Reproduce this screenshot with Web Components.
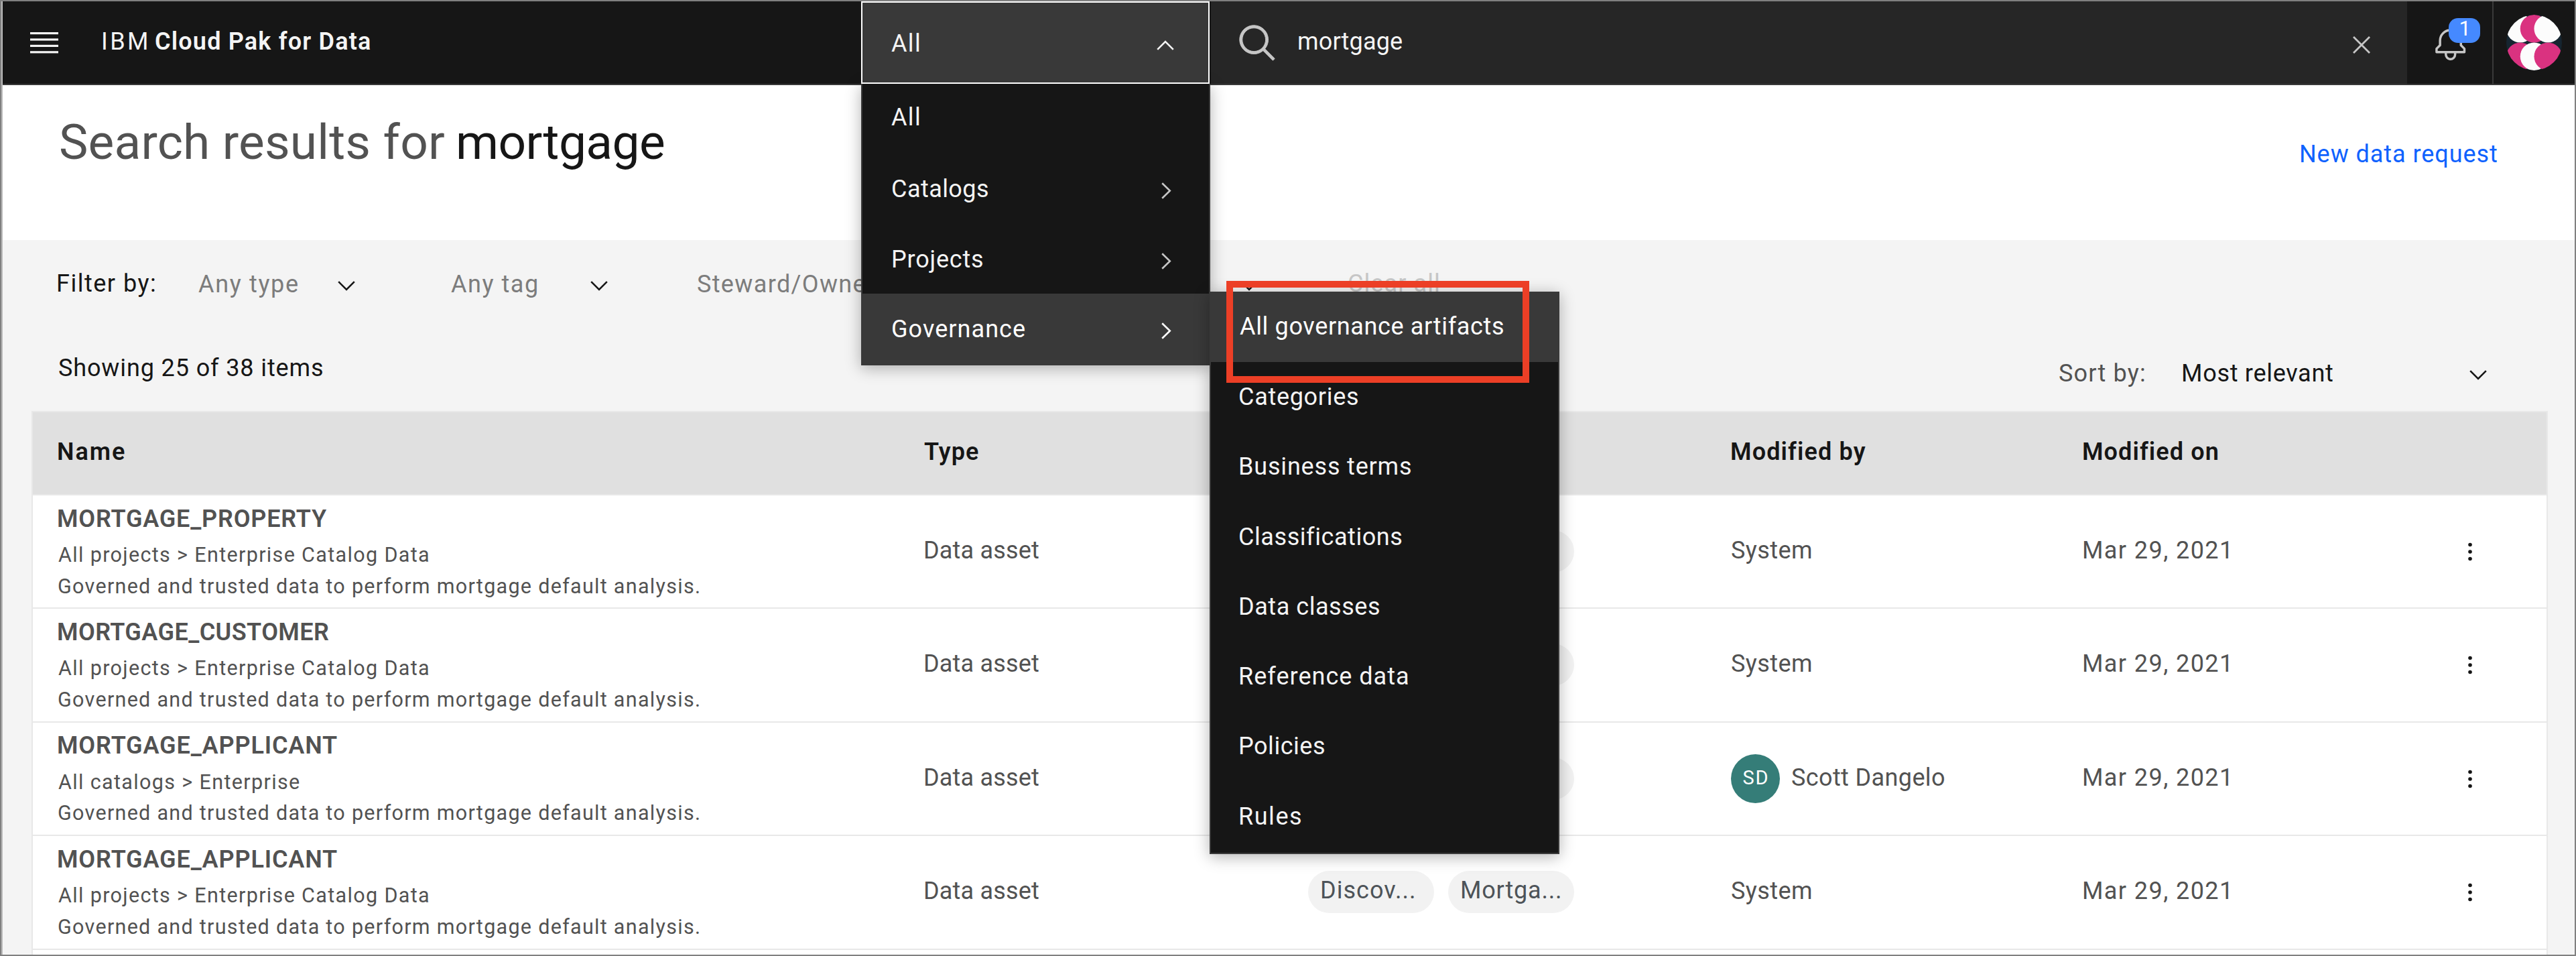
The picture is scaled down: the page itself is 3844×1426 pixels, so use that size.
<!DOCTYPE html>
<html lang="en">
<head>
<meta charset="utf-8">
<title>Search results - IBM Cloud Pak for Data</title>
<style>
html,body{margin:0;padding:0}
body{width:3844px;height:1426px;overflow:hidden;background:#f4f4f4;font-family:Roboto,"Noto Sans",sans-serif;font-size:36px;color:#161616}
</style>
</head>
<body>
<search-page></search-page>
<script>
const define = (name, html, setup) => {
  const tpl = document.createElement('template');
  tpl.innerHTML = html;
  customElements.define(name, class extends HTMLElement {
    connectedCallback() {
      if (this.shadowRoot) return;
      this.attachShadow({ mode: 'open' }).appendChild(tpl.content.cloneNode(true));
      if (setup) setup(this, this.shadowRoot);
    }
  });
};

/* One line of text whose ink spans exactly `w` pixels. */
const ctx = document.createElement('canvas').getContext('2d');
define('ui-text', `<style>
:host{display:block;flex:none;line-height:40px;height:40px;white-space:nowrap}
span{display:block;width:max-content}
</style><span><slot></slot></span>`, (el, root) => {
  const w = +el.getAttribute('w');
  const cs = getComputedStyle(el);
  ctx.font = cs.fontWeight + ' ' + cs.fontSize + ' ' + cs.fontFamily;
  const t = el.textContent;
  const m = ctx.measureText(t);
  const ink = m.actualBoundingBoxLeft + m.actualBoundingBoxRight;
  const span = root.querySelector('span');
  if (t.length > 1) span.style.letterSpacing = ((w - ink) / (t.length - 1)).toFixed(3) + 'px';
  span.style.marginLeft = m.actualBoundingBoxLeft.toFixed(2) + 'px';
  el.style.width = w + 'px';
});

const CHEVRONS = {
  down: ['26', '15', '1.2,1.2 13,13 24.8,1.2'],
  up: ['26', '15', '1.2,13.8 13,2 24.8,13.8'],
  right: ['15', '25', '1.2,1.2 12.8,12.5 1.2,23.8']
};
define('ui-chevron', `<style>:host{display:block;flex:none;line-height:0}svg{display:block;overflow:visible}</style>
<svg fill="none" stroke="currentColor" stroke-width="2.6"><polyline/></svg>`, (el, root) => {
  const [w, h, p] = CHEVRONS[el.getAttribute('dir')];
  const s = root.querySelector('svg');
  s.setAttribute('width', w); s.setAttribute('height', h);
  s.firstElementChild.setAttribute('points', p);
});

define('menu-item', `<style>
:host{display:flex;box-sizing:border-box;height:105px;padding:0 56px 0 var(--indent,45px);align-items:flex-start;justify-content:space-between;color:#f4f4f4}
:host([active]){background:#393939;color:#fff}
ui-chevron{margin-top:43px;color:#c6c6c6}
:host([active]) ui-chevron{color:#fff}
.t{padding-top:var(--drop,33px)}
</style><div class="t"><slot></slot></div>`, (el, root) => {
  if (el.hasAttribute('more')) {
    const c = document.createElement('ui-chevron');
    c.setAttribute('dir', 'right');
    root.appendChild(c);
  }
});

define('scope-menu', `<style>
:host{display:block;background:#161616;box-shadow:0 4px 22px rgba(0,0,0,.3);border:2px solid #393939;border-top:0;box-sizing:border-box}
</style><slot></slot>`);

define('scope-select', `<style>
:host{display:block;position:relative;height:123px}
.field{box-sizing:border-box;display:flex;justify-content:space-between;align-items:flex-start;width:520px;height:123px;padding:41px 51px 0 43px;background:#393939;border:2px solid #fff;color:#f4f4f4;position:relative;z-index:3}
.field ui-chevron{margin-top:15px}
.main{position:absolute;z-index:2;left:0;top:123px;width:521px;height:420px}
.sub{position:absolute;z-index:4;left:520px;top:433px;width:522px;height:839px;--indent:43px;--drop:32px}
.sub menu-item{height:104.3px}
.sub menu-item[active]{height:105px}
.mark{position:absolute;z-index:5;left:545px;top:417px;width:452px;height:152px;box-sizing:border-box;border:10px solid #ec3f26}
</style>
<div class="field"><ui-text w="42">All</ui-text><ui-chevron dir="up"></ui-chevron></div>
<scope-menu class="main">
<menu-item style="height:104px"><ui-text w="42" style="margin:-3px 0 0 -2px">All</ui-text></menu-item>
<menu-item more><ui-text w="142">Catalogs</ui-text></menu-item>
<menu-item more style="height:104px"><ui-text w="134">Projects</ui-text></menu-item>
<menu-item more active><ui-text w="197">Governance</ui-text></menu-item>
</scope-menu>
<scope-menu class="sub">
<menu-item active><ui-text w="393">All governance artifacts</ui-text></menu-item>
<menu-item><ui-text w="176">Categories</ui-text></menu-item>
<menu-item><ui-text w="255">Business terms</ui-text></menu-item>
<menu-item><ui-text w="240">Classifications</ui-text></menu-item>
<menu-item><ui-text w="208">Data classes</ui-text></menu-item>
<menu-item><ui-text w="251">Reference data</ui-text></menu-item>
<menu-item><ui-text w="126">Policies</ui-text></menu-item>
<menu-item><ui-text w="91">Rules</ui-text></menu-item>
</scope-menu>
<div class="mark"></div>`);

define('app-header', `<style>
:host{display:grid;grid-template-columns:1283px 522px 1fr 127px 123px;height:123px;background:#161616;border-bottom:2px solid #393939;color:#f4f4f4}
.brand{display:flex;align-items:flex-start;padding:40px 0 0 43px}
.brand svg{margin:5.5px 67px 0 0}
.search{display:flex;align-items:flex-start;background:#262626;height:123px;color:#f4f4f4}
.glass{margin:32px 30px 0 39px;width:62px;height:62px;fill:#c6c6c6}
.close{margin:52px 55px 0 auto}
.bell{position:relative}
.bell svg{display:block;margin:36px 0 0 37px;fill:#c6c6c6}
.badge{position:absolute;left:62px;top:25px;width:47px;height:37px;border-radius:14px;background:#4589ff;color:#fff;display:flex;justify-content:center;font-size:31px}
.badge ui-text{margin-top:-4px}
.user{border-left:2px solid #393939;padding:20px 0 0 19px}
</style>
<div class="brand">
<svg width="42" height="32" fill="#f4f4f4"><rect width="42" height="3.2"/><rect y="9.4" width="42" height="3.2"/><rect y="18.8" width="42" height="3.2"/><rect y="28.2" width="42" height="3.2"/></svg>
<ui-text w="65">IBM</ui-text><ui-text w="320" style="margin-left:13px;font-weight:600">Cloud Pak for Data</ui-text>
</div>
<scope-select></scope-select>
<div class="search">
<svg class="glass" viewBox="0 0 32 32"><path d="M29,27.5859l-7.5521-7.5521a11.0177,11.0177,0,1,0-1.4141,1.4141L27.5859,29ZM4,13a9,9,0,1,1,9,9A9.01,9.01,0,0,1,4,13Z" stroke="#c6c6c6" stroke-width=".5"/></svg>
<ui-text w="154" style="margin-top:40px">mortgage</ui-text>
<svg class="close" width="26" height="26" stroke="#c6c6c6" stroke-width="2.8"><path d="M1 1 25 25M25 1 1 25"/></svg>
</div>
<div class="bell">
<svg width="55.4" height="55.4" viewBox="0 0 32 32"><path d="M28.7071,19.293,26,16.5859V13a10.0136,10.0136,0,0,0-9-9.9492V1H15V3.0508A10.0136,10.0136,0,0,0,6,13v3.5859L3.2929,19.293A1,1,0,0,0,3,20v3a1,1,0,0,0,1,1h7v.7768a5.152,5.152,0,0,0,4.5,5.1987A5.0057,5.0057,0,0,0,21,25V24h7a1,1,0,0,0,1-1V20A1,1,0,0,0,28.7071,19.293ZM19,25a3,3,0,0,1-6,0V24h6Zm8-3H5V20.4141L7.707,17.707A1,1,0,0,0,8,17V13a8,8,0,0,1,16,0v4a1,1,0,0,0,.293.707L27,20.4141Z"/></svg>
<div class="badge"><ui-text w="12">1</ui-text></div>
</div>
<div class="user">
<svg width="83" height="83" viewBox="540 66 248 248"><defs><clipPath id="c"><circle cx="664" cy="190" r="124"/></clipPath></defs>
<g clip-path="url(#c)"><rect x="540" y="66" width="248" height="248" fill="#162530"/>
<circle cx="602" cy="128" r="62" fill="#fcfcfc"/><circle cx="664" cy="128" r="62" fill="#da3280"/><circle cx="726" cy="128" r="62" fill="#fcfcfc"/>
<circle cx="602" cy="252" r="62" fill="#da3280"/><circle cx="664" cy="252" r="62" fill="#fcfcfc"/><circle cx="726" cy="252" r="62" fill="#da3280"/></g></svg>
</div>`);

define('page-title', `<style>
:host{display:flex;box-sizing:border-box;height:231px;background:#fff;padding:65px 116px 0 88px;align-items:flex-start}
.h{display:flex;gap:21px;font-size:73px;color:#525252}
.k{color:#161616}
.l{margin:18px 0 0 auto;color:#0f62fe}
</style>
<div class="h"><ui-text w="573">Search results for</ui-text><ui-text class="k" w="307">mortgage</ui-text></div>
<ui-text class="l" w="293">New data request</ui-text>`);

define('filter-bar', `<style>
:host{display:block;height:255px}
.row{display:flex;align-items:flex-start;height:40px}
.f{padding:45px 0 0 84px}
.f .m{color:#7c7c7c;margin-top:1px}
.f ui-chevron{margin-top:16px}
.s{padding:86px 131px 0 86px;justify-content:space-between}
.o{display:flex;align-items:flex-start;margin-top:8px}
.o ui-chevron{margin-top:15px}
</style>
<div class="row f"><ui-text w="145">Filter by:</ui-text>
<ui-text class="m" w="148" style="margin-left:65px">Any type</ui-text><ui-chevron dir="down" style="margin-left:60px"></ui-chevron>
<ui-text class="m" w="128" style="margin-left:143px">Any tag</ui-text><ui-chevron dir="down" style="margin-left:80px"></ui-chevron>
<ui-text class="m" w="264" style="margin-left:134px">Steward/Owner</ui-text><ui-chevron dir="down" style="margin-left:546px"></ui-chevron>
<ui-text w="134" style="margin-left:136px;color:#c6c6c6">Clear all</ui-text></div>
<div class="row s"><ui-text w="393">Showing 25 of 38 items</ui-text>
<div class="o"><ui-text w="127" style="color:#525252">Sort by:</ui-text><ui-text w="224" style="margin-left:57px">Most relevant</ui-text><ui-chevron dir="down" style="margin-left:204px"></ui-chevron></div></div>`);

define('tag-chip', `<style>
:host{display:flex;box-sizing:border-box;width:188px;height:63px;border-radius:32px;background:#f2f2f2;color:#4d5358;padding:9px 20px 0}
</style><slot></slot>`);

define('user-badge', `<style>
:host{display:flex;align-items:center;gap:18px;margin-left:-1px}
.a{box-sizing:border-box;width:73px;height:73px;border-radius:50%;background:#357d78;color:#fff;font-size:29px;display:flex;justify-content:center;padding-top:15px}
</style><div class="a"><ui-text w="36">SD</ui-text></div><ui-text w="227" style="margin-top:-3px">Scott Dangelo</ui-text>`);

define('result-row', `<style>
:host{display:grid;grid-template-columns:1293px 572px 632px 525px 574px 1fr;box-sizing:border-box;height:169.4px;padding-left:38px;border-bottom:2px solid #e8e8e8;background:#fff;color:#525252;align-items:start}
.name{padding-top:14.5px}
.sub{font-size:30.5px;margin-top:14.5px}
.desc{margin-top:6.5px}
.c{padding-top:62px}
.tags{display:flex;gap:21px;padding-top:52px}
.by{height:167px;display:flex;align-items:center}
.dots{padding-top:70px}
svg{display:block}
</style>
<div class="name"><slot name="name"></slot><div class="sub"><slot name="path"></slot></div>
<div class="sub desc"><ui-text w="956">Governed and trusted data to perform mortgage default analysis.</ui-text></div></div>
<div class="c"><ui-text w="170">Data asset</ui-text></div>
<div class="tags"><slot name="tags"><tag-chip></tag-chip><tag-chip></tag-chip></slot></div>
<div class="by"><slot name="by"><ui-text w="119" style="margin-bottom:4px">System</ui-text></slot></div>
<div class="c"><ui-text w="216">Mar 29, 2021</ui-text></div>
<div class="dots"><svg width="6" height="28" fill="#161616"><circle cx="3" cy="3.5" r="2.8"/><circle cx="3" cy="14" r="2.8"/><circle cx="3" cy="24.5" r="2.8"/></svg></div>`);

define('result-table', `<style>
:host{display:block;box-sizing:border-box;margin:0 40px 0 45px;border:2px solid #e8e8e8;border-bottom:0;height:815px;background:#fff}
.head{display:grid;grid-template-columns:1292px 1205px 525px 1fr;box-sizing:border-box;height:124px;padding:39px 0 0 38px;background:#e0e0e0;border-bottom:2px solid #e8e8e8;font-weight:600;color:#161616}
[slot=name]{font-weight:600}
</style>
<div class="head"><ui-text w="99">Name</ui-text><ui-text w="81">Type</ui-text><ui-text w="199">Modified by</ui-text><ui-text w="200">Modified on</ui-text></div>
<result-row><ui-text slot="name" w="401">MORTGAGE_PROPERTY</ui-text><ui-text slot="path" w="552">All projects &gt; Enterprise Catalog Data</ui-text></result-row>
<result-row><ui-text slot="name" w="404">MORTGAGE_CUSTOMER</ui-text><ui-text slot="path" w="552">All projects &gt; Enterprise Catalog Data</ui-text></result-row>
<result-row><ui-text slot="name" w="416">MORTGAGE_APPLICANT</ui-text><ui-text slot="path" w="360">All catalogs &gt; Enterprise</ui-text><user-badge slot="by"></user-badge></result-row>
<result-row><ui-text slot="name" w="416">MORTGAGE_APPLICANT</ui-text><ui-text slot="path" w="552">All projects &gt; Enterprise Catalog Data</ui-text><tag-chip slot="tags"><ui-text w="138">Discov...</ui-text></tag-chip><tag-chip slot="tags"><ui-text w="147">Mortga...</ui-text></tag-chip></result-row>`);

define('search-page', `<style>
:host{display:flex;flex-direction:column;box-sizing:border-box;position:relative;width:3844px;height:1426px;border:2px solid #808080;background:#f4f4f4;overflow:hidden}
:host::after{content:"";position:absolute;z-index:9;left:0;top:0;bottom:0;width:2px;background:#bcbcbc}
app-header{position:relative;z-index:2;flex:none}
page-title,filter-bar,result-table{flex:none}
</style>
<app-header></app-header><page-title></page-title><filter-bar></filter-bar><result-table></result-table>`);
</script>
</body>
</html>
